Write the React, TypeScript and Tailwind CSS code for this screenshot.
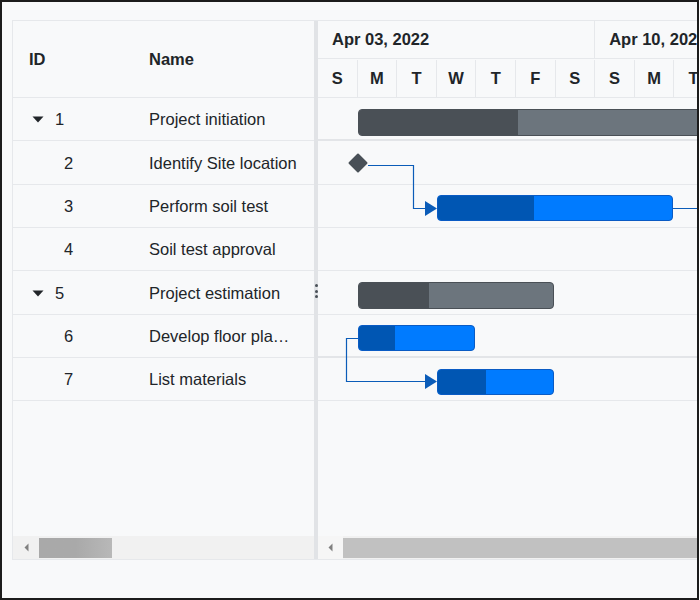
import React from "react";

type Row = { id: number; name: string; parent?: boolean };

const rows: Row[] = [
  { id: 1, name: "Project initiation", parent: true },
  { id: 2, name: "Identify Site location" },
  { id: 3, name: "Perform soil test" },
  { id: 4, name: "Soil test approval" },
  { id: 5, name: "Project estimation", parent: true },
  { id: 6, name: "Develop floor plan for estimation" },
  { id: 7, name: "List materials" },
];

const days = ["S", "M", "T", "W", "T", "F", "S", "S", "M", "T", "W", "T", "F", "S"];
const DAY = 39.6;
const ROW = 43.35;

type Bar = {
  row: number;
  left: number;
  width: number;
  progress: number;
  kind: "parent" | "child";
};

const bars: Bar[] = [
  { row: 0, left: 40, width: 420, progress: 159, kind: "parent" },
  { row: 2, left: 119, width: 236, progress: 96, kind: "child" },
  { row: 4, left: 40, width: 196, progress: 70, kind: "parent" },
  { row: 5, left: 40, width: 117, progress: 36, kind: "child" },
  { row: 6, left: 119, width: 117, progress: 48, kind: "child" },
];

function Caret() {
  return (
    <svg width="12" height="7" viewBox="0 0 12 7" className="shrink-0">
      <path d="M0.5 0.5 L11.5 0.5 L6 6.5 Z" fill="#212529" />
    </svg>
  );
}

function ScrollArrow() {
  return (
    <svg width="5" height="9" viewBox="0 0 5 9">
      <path d="M4.5 0.5 L0.5 4.5 L4.5 8.5 Z" fill="#808080" />
    </svg>
  );
}

export default function App() {
  return (
    <div className="w-[699px] h-[600px] border-2 border-[#1c1c1c] bg-[#f8f9fa] overflow-hidden pl-[10px] pt-[18px] font-['Liberation_Sans',Arial,sans-serif] text-[#212529]">
      <div className="flex h-[540px] w-[720px] border-t border-l border-b border-[#e6e8eb]">
        {/* grid pane */}
        <div className="w-[301px] shrink-0 flex flex-col">
          <div className="h-[77px] flex items-center border-b border-[#e6e8eb] text-[16.5px] font-bold">
            <div className="w-[120px] pl-[16px]">ID</div>
            <div className="flex-1 pl-[16px]">Name</div>
          </div>
          {rows.map((r) => (
            <div
              key={r.id}
              className="flex items-center border-b border-[#e6e8eb] text-[16.5px] pt-[1px]"
              style={{ height: ROW }}
            >
              <div className="w-[120px] flex items-center">
                {r.parent ? (
                  <div className="flex items-center pl-[19px] gap-[11px]">
                    <Caret />
                    <span>{r.id}</span>
                  </div>
                ) : (
                  <span className="pl-[51px]">{r.id}</span>
                )}
              </div>
              <div className="flex-1 min-w-0 pl-[16px] pr-[16px] truncate">{r.name}</div>
            </div>
          ))}
          <div className="flex-1" />
          <div className="h-[23px] bg-[#f1f1f1] flex items-center">
            <div className="w-[26px] h-full flex items-center justify-center">
              <ScrollArrow />
            </div>
            <div className="w-[73px] h-[20px] bg-gradient-to-r from-[#a9a9a9] via-[#a9a9a9] to-[#b8b8b8]" />
          </div>
        </div>

        {/* splitter */}
        <div className="relative w-[4px] shrink-0 bg-[#e1e3e6]">
          <div className="absolute left-[1px] top-[263px] flex flex-col gap-[2.5px]">
            <div className="w-[3px] h-[3px] rounded-full bg-[#495057]" />
            <div className="w-[3px] h-[3px] rounded-full bg-[#495057]" />
            <div className="w-[3px] h-[3px] rounded-full bg-[#495057]" />
          </div>
        </div>

        {/* chart pane */}
        <div className="flex-1 flex flex-col min-w-0">
          <div className="h-[77px] border-b border-[#e6e8eb] flex flex-col font-bold text-[16.5px]">
            <div className="h-[38px] flex border-b border-[#e6e8eb]">
              <div
                className="shrink-0 border-r border-[#e6e8eb] flex items-center pl-[14px]"
                style={{ width: DAY * 7 }}
              >
                Apr 03, 2022
              </div>
              <div
                className="shrink-0 border-r border-[#e6e8eb] flex items-center pl-[14px]"
                style={{ width: DAY * 7 }}
              >
                Apr 10, 2022
              </div>
            </div>
            <div className="flex-1 flex pt-[1px]">
              {days.map((d, i) => (
                <div
                  key={i}
                  className="shrink-0 border-r border-[#e6e8eb] flex items-center justify-center"
                  style={{ width: DAY }}
                >
                  {d}
                </div>
              ))}
            </div>
          </div>

          <div className="relative flex-1">
            {rows.map((r, i) => (
              <div
                key={r.id}
                className={
                  i === 0 || i === 5
                    ? "border-b-2 border-[#e3e5e8]"
                    : "border-b border-[#e6e8eb]"
                }
                style={{ height: ROW }}
              />
            ))}

            {/* task bars */}
            {bars.map((b, i) => {
              const parent = b.kind === "parent";
              return (
                <div
                  key={i}
                  className={
                    parent
                      ? "absolute h-[27px] rounded-[4px] border border-[#4a5056] bg-[#6c757d] overflow-hidden"
                      : "absolute h-[26px] rounded-[4px] border border-[#0a5bc4] bg-[#007bff] overflow-hidden"
                  }
                  style={{ left: b.left, width: b.width, top: b.row * ROW + 10.5 }}
                >
                  <div
                    className={parent ? "h-full bg-[#4a5056]" : "h-full bg-[#0056b3]"}
                    style={{ width: b.progress }}
                  />
                </div>
              );
            })}

            {/* milestone */}
            <div
              className="absolute w-[14px] h-[14px] bg-[#495057] rotate-45 rounded-[1px]"
              style={{ left: 33, top: ROW + 21.6 - 7 }}
            />

            {/* dependency lines */}
            <svg className="absolute left-0 top-0" width="400" height="320">
              <g stroke="#0b5cb8" strokeWidth="1.2" fill="none">
                <path d="M50 67.5 H95.5 V110.5 H108" />
                <path d="M355 110.5 H400" />
                <path d="M40 240.5 H28.5 V283.5 H108" />
              </g>
              <path d="M107 103 L119 110.5 L107 118 Z" fill="#0b5cb8" />
              <path d="M107 276 L119 283.5 L107 291 Z" fill="#0b5cb8" />
            </svg>
          </div>

          <div className="h-[23px] bg-[#f1f1f1] flex items-center">
            <div className="w-[25px] h-full bg-[#f6f6f6] flex items-center justify-center">
              <ScrollArrow />
            </div>
            <div className="flex-1 h-[20px] bg-[#c1c1c1]" />
          </div>
        </div>
      </div>
    </div>
  );
}
